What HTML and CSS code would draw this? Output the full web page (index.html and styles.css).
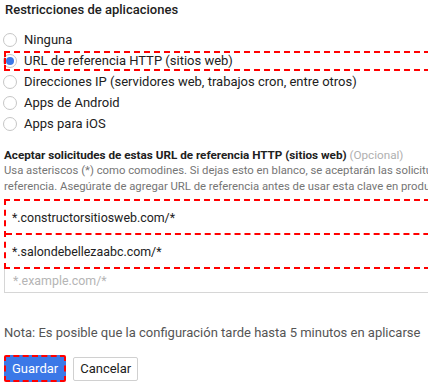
FILE: index.html
```html
<!DOCTYPE html>
<html lang="es">
  <head>
    <meta charset="UTF-8">
    <title>Restricciones de aplicaciones</title>
    <meta name="viewport" content="width=device-width, initial-scale=1.0">
    <link rel="stylesheet" href="styles.css">
  </head>
  <body>
    <div class="page">

      <h2 class="title">Restricciones de aplicaciones</h2>

      <div class="radio-list">
        <label class="radio-row"><span class="radio"></span>Ninguna</label>
        <label class="radio-row marked"><span class="radio checked"></span>URL de referencia HTTP (sitios web)</label>
        <label class="radio-row"><span class="radio"></span>Direcciones IP (servidores web, trabajos cron, entre otros)</label>
        <label class="radio-row"><span class="radio"></span>Apps de Android</label>
        <label class="radio-row"><span class="radio"></span>Apps para iOS</label>
      </div>

      <div class="referrers">
        <div class="ref-head">Aceptar solicitudes de estas URL de referencia HTTP (sitios web) <span class="optional">(Opcional)</span></div>
        <div class="ref-help">Usa asteriscos (*) como comodines. Si dejas esto en blanco, se aceptarán las solicitudes de cualquier URL de<br>referencia. Asegúrate de agregar URL de referencia antes de usar esta clave en producción.</div>

        <div class="marked-inputs">
          <div class="ref-input">*.constructorsitiosweb.com/*</div>
          <div class="ref-input">*.salondebellezaabc.com/*</div>
        </div>
        <div class="ref-input empty">*.example.com/*</div>
      </div>

      <p class="note">Nota: Es posible que la configuración tarde hasta 5 minutos en aplicarse</p>

      <div class="actions">
        <button class="btn primary">Guardar</button>
        <button class="btn">Cancelar</button>
      </div>

    </div>
  </body>
</html>
```

FILE: styles.css
```css
* { box-sizing: border-box; }

body {
  margin: 0;
  font-family: Roboto, "Liberation Sans", Arial, sans-serif;
  color: #212121;
  background: #fff;
  overflow: hidden;
}

.page {
  width: 640px;
  padding: 2px 0 0 4px;
}

.title {
  margin: 0 0 11px 1px;
  font-size: 13px;
  font-weight: 500;
  line-height: 16px;
}

/* radio list */
.radio-list {
  display: flex;
  flex-direction: column;
}

.radio-row {
  position: relative;
  display: flex;
  align-items: center;
  gap: 7px;
  height: 21px;
  margin-left: -1px;
  font-size: 13px;
}

.radio {
  width: 14px;
  height: 14px;
  border: 1px solid #c6c6c6;
  border-radius: 50%;
  display: flex;
  align-items: center;
  justify-content: center;
}

.radio.checked::before {
  content: "";
  width: 8px;
  height: 8px;
  border-radius: 50%;
  background: #3b78e7;
}

.radio-row.marked::after {
  content: "";
  position: absolute;
  left: 1px;
  right: 0;
  top: 1px;
  bottom: 0;
  border: 2px dashed #f00;
}

/* referrers */
.referrers {
  margin-top: 13px;
}

.ref-head {
  font-size: 11.7px;
  font-weight: 700;
  line-height: 16px;
}

.optional {
  font-weight: 400;
  color: #b0b0b0;
}

.ref-help {
  font-size: 11.3px;
  line-height: 16px;
  color: #757575;
  white-space: nowrap;
}

.marked-inputs {
  margin-top: 4px;
  border: 2px dashed #f00;
}

.marked-inputs .ref-input {
  height: 32px;
  border: none;
  padding-left: 6px;
}

.marked-inputs .ref-input + .ref-input {
  height: 34px;
  border-top: 2px dashed #f00;
}

.ref-input {
  display: flex;
  align-items: center;
  height: 24px;
  padding-left: 8px;
  font-size: 12.4px;
  border: 1px solid #d6d6d6;
  border-top: none;
}

.ref-input.empty {
  color: #b5b5b5;
}

.note {
  margin: 32px 0 0;
  font-size: 13px;
  line-height: 16px;
  color: #555;
}

/* buttons */
.actions {
  display: flex;
  align-items: center;
  gap: 7px;
  margin-top: 14px;
}

.btn {
  height: 24px;
  padding: 0 6px;
  font-family: inherit;
  font-size: 13px;
  color: #212121;
  background: #fff;
  border: 1px solid #d0d0d0;
  border-radius: 2px;
}

.btn.primary {
  height: 27px;
  padding: 0 6px;
  color: #fff;
  background: #3b78e7;
  border: 2px dashed #f00;
}
```
